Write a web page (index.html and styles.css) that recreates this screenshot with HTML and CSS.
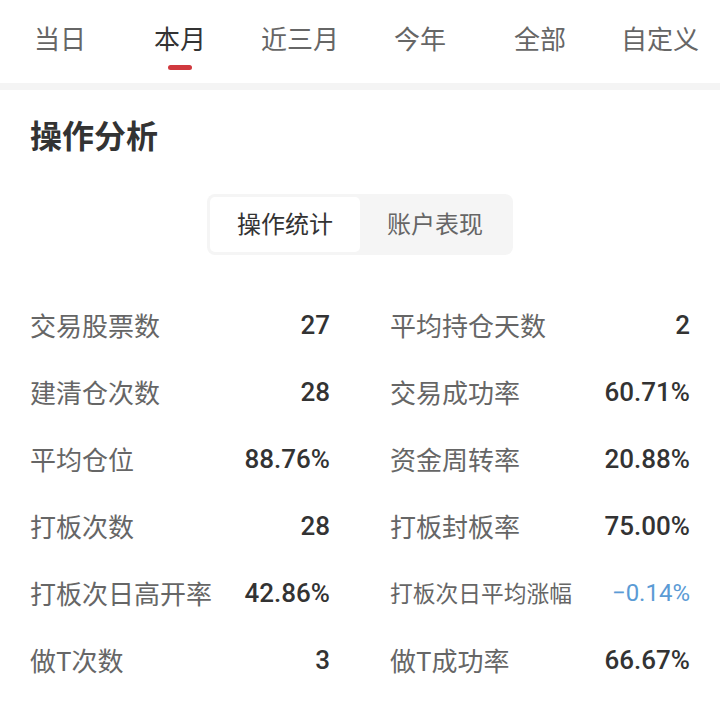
FILE: index.html
```html
<!DOCTYPE html>
<html lang="zh">
<head>
<meta charset="utf-8">
<title>操作分析</title>
<link rel="stylesheet" href="styles.css">
</head>
<body>
<nav class="tabs">
  <div class="tab">当日</div>
  <div class="tab active">本月</div>
  <div class="tab">近三月</div>
  <div class="tab">今年</div>
  <div class="tab">全部</div>
  <div class="tab">自定义</div>
</nav>
<div class="band"></div>
<main class="content">
  <h1 class="title">操作分析</h1>
  <div class="seg-wrap">
    <div class="seg">
      <div class="seg-item on">操作统计</div>
      <div class="seg-item">账户表现</div>
    </div>
  </div>
  <div class="stats">
    <div class="row"><span class="label">交易股票数</span><span class="val">27</span></div>
    <div class="row"><span class="label">平均持仓天数</span><span class="val">2</span></div>
    <div class="row"><span class="label">建清仓次数</span><span class="val">28</span></div>
    <div class="row"><span class="label">交易成功率</span><span class="val">60.71%</span></div>
    <div class="row"><span class="label">平均仓位</span><span class="val">88.76%</span></div>
    <div class="row"><span class="label">资金周转率</span><span class="val">20.88%</span></div>
    <div class="row"><span class="label">打板次数</span><span class="val">28</span></div>
    <div class="row"><span class="label">打板封板率</span><span class="val">75.00%</span></div>
    <div class="row"><span class="label">打板次日高开率</span><span class="val">42.86%</span></div>
    <div class="row"><span class="label label-sm">打板次日平均涨幅</span><span class="val val-sm neg">−0.14%</span></div>
    <div class="row"><span class="label">做T次数</span><span class="val">3</span></div>
    <div class="row"><span class="label">做T成功率</span><span class="val">66.67%</span></div>
  </div>
</main>
</body>
</html>
```

FILE: styles.css
```css
* { box-sizing: border-box; }
html, body { margin: 0; padding: 0; background: #fff; }
body {
  font-family: "Noto Sans CJK SC", "Noto Sans", sans-serif;
  color: #333;
  width: 720px;
  overflow: hidden;
}
.tabs {
  display: grid;
  grid-template-columns: repeat(6, 1fr);
  height: 83px;
}
.tab {
  font-size: 26px;
  line-height: 36px;
  padding-top: 20px;
  color: #666;
  text-align: center;
}
.tab.active { color: #333; }
.tab.active::after {
  content: "";
  display: block;
  width: 24px;
  height: 5px;
  border-radius: 3px;
  background: #d0393e;
  margin: 9px auto 0;
}
.band {
  height: 7px;
  background: #f4f4f4;
}
.content { padding: 0 30px; }
.title {
  margin: 0;
  padding-top: 24px;
  font-size: 32px;
  line-height: 40px;
  font-weight: 700;
  color: #333;
}
.seg-wrap {
  display: flex;
  justify-content: center;
  margin-top: 40px;
}
.seg {
  display: flex;
  padding: 3px;
  background: #f5f5f5;
  border-radius: 8px;
}
.seg-item {
  width: 150px;
  height: 55px;
  padding-bottom: 4px;
  display: flex;
  align-items: center;
  justify-content: center;
  font-size: 24px;
  color: #666;
  border-radius: 5px;
}
.seg-item.on {
  background: #fff;
  color: #333;
}
.stats {
  display: grid;
  grid-template-columns: 1fr 1fr;
  column-gap: 60px;
  margin-top: 36px;
}
.row {
  height: 67px;
  display: flex;
  align-items: center;
  justify-content: space-between;
}
.label {
  font-size: 26px;
  color: #666;
  white-space: nowrap;
}
.label-sm {
  font-size: 22.75px;
}
.val {
  font-family: Roboto, "Noto Sans", sans-serif;
  font-size: 26px;
  font-weight: 500;
  color: #333;
}
.val-sm { font-size: 24px; font-weight: 400; }
.neg { color: #5b9bd5; }
```
